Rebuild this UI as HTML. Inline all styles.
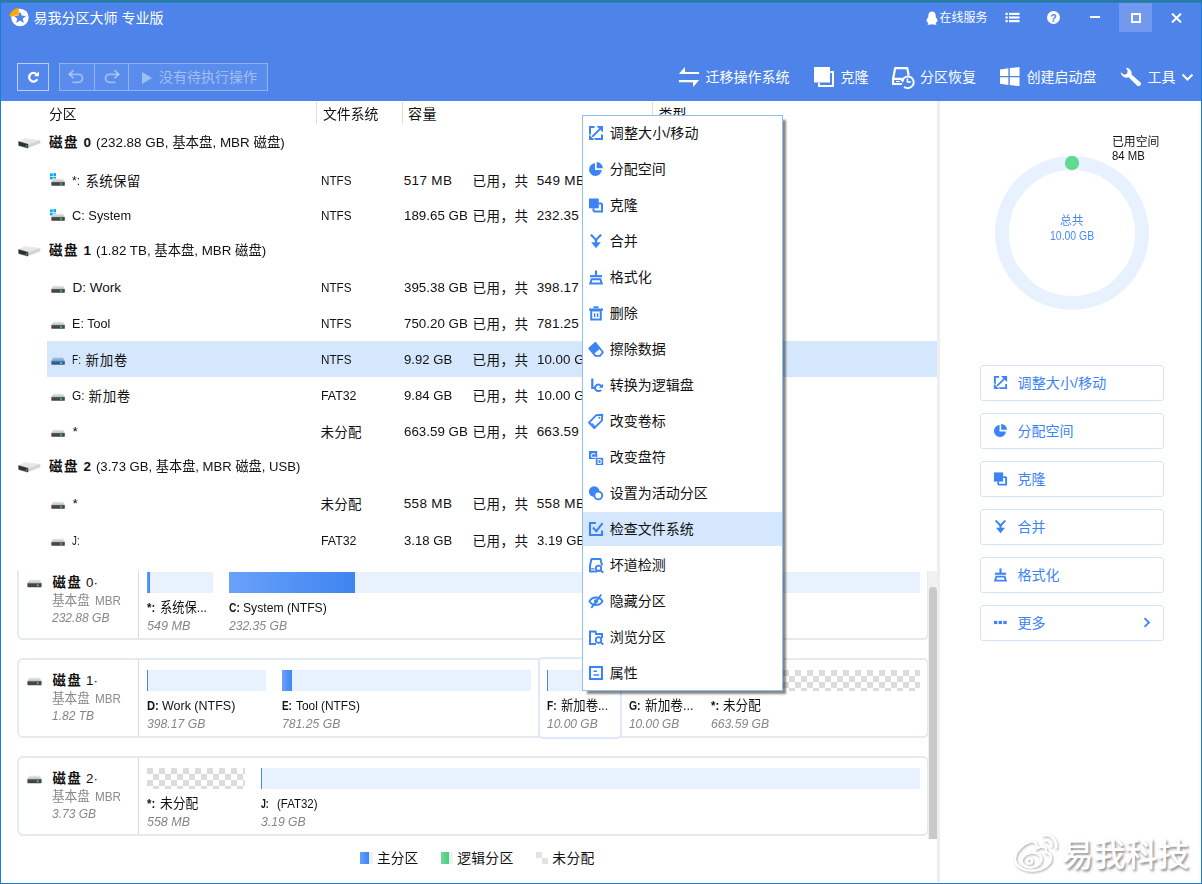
<!DOCTYPE html>
<html lang="zh-CN"><head>
<meta charset="utf-8">
<title>易我分区大师 专业版</title>
<style>
*{box-sizing:border-box;margin:0;padding:0}
html,body{width:1202px;height:884px;overflow:hidden;background:#fff}
body{font-family:"Liberation Sans","Noto Sans CJK SC",sans-serif;font-size:14px;color:#111;position:relative}
.abs{position:absolute}
#win{position:absolute;left:0;top:0;width:1202px;height:884px;background:#fff;overflow:hidden}
#topedge{position:absolute;left:0;top:0;width:1202px;height:3px;background:linear-gradient(#2d7b9a 0,#2d7b9a 2px,#1c82d6 2px);z-index:50}
#ledge{position:absolute;left:0;top:2px;width:1px;height:882px;background:#1a7cd2;z-index:50}
#redge{position:absolute;left:1201px;top:2px;width:1px;height:882px;background:#1a7cd2;z-index:50}
#bedge{position:absolute;left:0;top:883px;width:1202px;height:1px;background:#1a7cd2;z-index:50}
#hdr{position:absolute;left:0;top:0;width:1202px;height:101px;background:#4e84ea;color:#fff}
.t{position:absolute;white-space:nowrap;line-height:1}
.ttl{left:33.500px;top:11px;font-size:14px;color:#fff}
.tb{font-size:15px;color:#fff;top:69px}
.box{position:absolute;border:1px solid rgba(255,255,255,.55)}
/* table */
.th{top:106px;font-size:15px;color:#111}
.colsep{position:absolute;top:102px;width:1px;height:22px;background:#dcdcdc}
.row{position:absolute;left:0;height:36px;width:938px}
.r{font-size:13.5px;color:#111}
.dk{font-size:13.5px;color:#111}
.dk b{font-weight:700}

.dbox{position:absolute;left:17px;width:912px;height:80px;border:2px solid #e5e9f0;border-radius:6px;background:#fff}
.dbox i{position:absolute;left:119px;top:0;width:1px;height:76px;background:#d5dbe8}
.bar{position:absolute;height:21px;background:#e8f2fe}
.used{position:absolute;left:0;top:0;height:21px;background:linear-gradient(90deg,#69a2f9,#3f84f0)}
.chk{position:absolute;height:21px;background-color:#fff;background-image:conic-gradient(#fff 25%,#dcdcdc 0 50%,#fff 0 75%,#dcdcdc 0);background-size:12px 12px}
.g{color:#8a8a8a}
.it{font-style:italic;color:#868686}

#menu{position:absolute;left:582px;top:115px;width:201px;height:576px;background:#fff;border:1px solid #8dc0ee;box-shadow:3.500px 4px 2px -1px rgba(0,0,0,.47);z-index:20}
.mi{font-size:14px;color:#111}
.btn{position:absolute;left:980px;width:184px;height:35.500px;border:1px solid #d4e3fb;border-radius:3px;background:#fff}
.bt{font-size:14px;color:#3c84f6}
</style>
</head>
<body>
<div id="win">
<div id="hdr">
  <svg class="abs" style="left:8px;top:7px" width="24" height="22" viewBox="0 0 24 22">
    <circle cx="12" cy="10.5" r="8.7" fill="#fff"></circle>
    <path d="M12 4.6l1.7 4 4.3.3-3.3 2.8 1.1 4.2-3.8-2.4-3.8 2.400 1.100-4.200-3.300-2.800 4.300-.3z" fill="#4e84ea"></path>
    <path d="M1.500 9.300C2.500 4.500 6.500 1.600 10.800 1v7.300H7.300l-1.300 1z" fill="#ffa800"></path>
  </svg>
  <div class="t ttl">易我分区大师 专业版</div>
</div>
<div id="topedge"></div><div id="ledge"></div><div id="redge"></div><div id="bedge"></div>

<!-- window controls -->
<svg class="abs" style="left:925px;top:11px" width="14" height="14" viewBox="0 0 14 14"><path d="M7 .5c2.400 0 3.700 1.900 3.700 4.300 0 .6 0 1.100.2 1.500.9 1.200 1.700 2.600 1.700 3.600 0 .8-.4.900-.8.400-.2.900-.6 1.500-1.200 2 .6.300.9.600.9.900 0 .5-1 .6-2 .6-.9 0-1.800-.2-2.500-.5-.7.300-1.600.5-2.500.5-1 0-2-.1-2-.6 0-.3.300-.6.900-.9-.6-.5-1-1.100-1.200-2-.4.500-.8.400-.8-.4 0-1 .8-2.400 1.700-3.600.2-.4.200-.9.200-1.500C3.300 2.400 4.600.5 7 .5z" fill="#fff"></path></svg>
<div class="t" style="left:939.500px;top:12px;font-size:12px;color:#fff">在线服务</div>
<svg class="abs" style="left:1005px;top:12px" width="15" height="11" viewBox="0 0 15 11"><g fill="#fff"><rect x=".5" y=".8" width="2.200" height="2.200"></rect><rect x="4" y=".8" width="10.500" height="2.200"></rect><rect x=".5" y="4.400" width="2.200" height="2.200"></rect><rect x="4" y="4.400" width="10.500" height="2.200"></rect><rect x=".5" y="8" width="2.200" height="2.200"></rect><rect x="4" y="8" width="10.500" height="2.200"></rect></g></svg>
<div class="abs" style="left:1047px;top:11px;width:13px;height:13px;border-radius:50%;background:#fff"></div>
<div class="t" style="left:1050.300px;top:12.500px;font-size:10.500px;font-weight:700;color:#4e84ea">?</div>
<div class="abs" style="left:1090px;top:16.200px;width:10px;height:2.200px;background:#fff"></div>
<div class="abs" style="left:1119px;top:3px;width:33px;height:28.500px;background:#7399ee"></div>
<div class="abs" style="left:1130.500px;top:13px;width:10px;height:9.500px;border:2px solid #fff"></div>
<svg class="abs" style="left:1171px;top:12.500px" width="11" height="10" viewBox="0 0 11 10"><path d="M1 .6l9 8.800M10 .6L1 9.400" stroke="#fff" stroke-width="2.100" fill="none"></path></svg>
<!-- left toolbar -->
<div class="box" style="left:17px;top:63px;width:32px;height:28px;border-color:rgba(255,255,255,.6);background:rgba(255,255,255,.03)"></div>
<svg class="abs" style="left:26px;top:70px" width="15" height="15" viewBox="0 0 15 15"><path d="M11.300 9.200A4.300 4.300 0 1 1 10.600 4.300" fill="none" stroke="#fff" stroke-width="2.300"></path><path d="M8.200 6.300h4.800V1.500z" fill="#fff"></path></svg>
<div class="box" style="left:59px;top:63px;width:209px;height:28px;border-color:rgba(255,255,255,.33);background:rgba(255,255,255,.07)"></div>
<div class="abs" style="left:93.500px;top:64px;width:1px;height:26px;background:rgba(255,255,255,.33)"></div>
<div class="abs" style="left:127.500px;top:64px;width:1px;height:26px;background:rgba(255,255,255,.33)"></div>
<svg class="abs" style="left:68px;top:69px" width="18" height="15" viewBox="0 0 18 15"><path d="M1.200 5.300H10.500a4 4 0 0 1 0 8H4.500" fill="none" stroke="rgba(255,255,255,.42)" stroke-width="1.800"></path><path d="M5.600 1.200L1.400 5.300l4.200 4.100" fill="none" stroke="rgba(255,255,255,.42)" stroke-width="1.800"></path></svg>
<svg class="abs" style="left:102px;top:69px" width="18" height="15" viewBox="0 0 18 15"><g transform="translate(18,0) scale(-1,1)"><path d="M1.200 5.300H10.500a4 4 0 0 1 0 8H4.500" fill="none" stroke="rgba(255,255,255,.42)" stroke-width="1.800"></path><path d="M5.600 1.200L1.400 5.300l4.200 4.100" fill="none" stroke="rgba(255,255,255,.42)" stroke-width="1.800"></path></g></svg>
<svg class="abs" style="left:141.500px;top:71.500px" width="10" height="12" viewBox="0 0 10 12"><path d="M0 0l10 6-10 6z" fill="rgba(255,255,255,.42)"></path></svg>
<div class="t" style="left:159px;top:70px;font-size:14px;color:rgba(255,255,255,.45)">没有待执行操作</div>
<!-- right toolbar -->
<svg class="abs" style="left:678px;top:67px" width="22" height="21" viewBox="0 0 22 21"><path d="M.9 7.100L6.800 0 7.200 4.900H21.100V7.100z" fill="#fff"></path><path d="M.9 13H21.100L15.300 20.100 14.800 15.200H.9z" fill="#fff"></path></svg>
<div class="t tb" style="left:705.500px;top:70px;font-size:14px">迁移操作系统</div>
<svg class="abs" style="left:813px;top:66px" width="22" height="22" viewBox="0 0 22 22"><rect x="1" y="1" width="16" height="15.500" fill="#fff"></rect><path d="M17.200 6h2.800v14h-14v-3.300" fill="none" stroke="#fff" stroke-width="2"></path></svg>
<div class="t tb" style="left:840.500px;top:70px;font-size:14px">克隆</div>
<svg class="abs" style="left:891px;top:67px" width="25" height="23" viewBox="0 0 25 23"><g fill="none" stroke="#fff" stroke-width="2.200" stroke-linejoin="miter"><path d="M2.100 11.900L4.200 1.100H16.200L17.700 8.500"></path><path d="M11.500 11.900H2.100V17H11"></path></g><path d="M5 14.500H8.800" stroke="#fff" stroke-width="1.100"></path><circle cx="16.900" cy="15.300" r="5.800" fill="#4e84ea"></circle><path d="M11.490 13.220A5.800 5.800 0 1 1 13.100 19.680" fill="none" stroke="#fff" stroke-width="1.900"></path><path d="M9 12.600L13.600 11.300 12 15.800z" fill="#fff"></path><path d="M16.400 11.600V15H19.900" fill="none" stroke="#fff" stroke-width="1.500"></path></svg>
<div class="t tb" style="left:920px;top:70px;font-size:14px">分区恢复</div>
<svg class="abs" style="left:999.500px;top:66.800px" width="20" height="19.500" viewBox="0 0 21 21" preserveAspectRatio="none"><g fill="#fff"><path d="M0 2.600L8.800 1.400V9.600H0z"></path><path d="M10.300 1.200L20.500 0V9.600H10.300z"></path><path d="M0 11.100H8.800V19.300L0 18.100z"></path><path d="M10.300 11.100H20.500V20.700L10.300 19.500z"></path></g></svg>
<div class="t tb" style="left:1026.500px;top:70px;font-size:14px">创建启动盘</div>
<svg class="abs" style="left:1119.500px;top:67px" width="22" height="20" viewBox="0 0 22 20"><path d="M5.800.7a5.600 5.600 0 0 1 5.700 6.800L20.300 15.200a2.300 2.300 0 0 1-3.300 3.300L8.600 10.300A5.600 5.600 0 0 1 .8 5.200L4 7.700 7 6.800 7.700 3.700z" fill="#fff"></path></svg>
<div class="t tb" style="left:1147.500px;top:70px;font-size:14px">工具</div>
<svg class="abs" style="left:1181px;top:73px" width="13" height="9" viewBox="0 0 13 9"><path d="M1.500 1.500L6.500 6.500l5-5" fill="none" stroke="#fff" stroke-width="2"></path></svg>
<!--TOOLBAR-->

<svg width="0" height="0" style="position:absolute">
 <defs>
  <linearGradient id="gtop" x1="0" y1="0" x2="0" y2="1"><stop offset="0" stop-color="#f0f0f0"></stop><stop offset="1" stop-color="#b9bbbd"></stop></linearGradient>
  <linearGradient id="gtopb" x1="0" y1="0" x2="0" y2="1"><stop offset="0" stop-color="#a9c6e6"></stop><stop offset="1" stop-color="#6f9fd0"></stop></linearGradient>
  <symbol id="drv" viewBox="0 0 15 9"><path d="M2.300.5h10.400L14.500 4.300H.5z" fill="url(#gtop)"></path><rect x=".4" y="4.200" width="14.200" height="4" rx=".6" fill="#454545"></rect><rect x=".4" y="4.200" width="14.200" height=".7" fill="#6a6a6a"></rect><circle cx="10.700" cy="6.300" r="1" fill="#3be04a"></circle></symbol>
  <symbol id="drvb" viewBox="0 0 15 9"><path d="M2.300.5h10.400L14.500 4.300H.5z" fill="url(#gtopb)"></path><rect x=".4" y="4.200" width="14.200" height="4" rx=".6" fill="#2f5f8f"></rect><rect x=".4" y="4.200" width="14.200" height=".7" fill="#4f82b5"></rect><circle cx="10.700" cy="6.300" r="1" fill="#5cf08a"></circle></symbol>
  <symbol id="flag" viewBox="0 0 7 7"><g fill="#00adef"><rect x="0" y=".3" width="2.900" height="2.800"></rect><rect x="3.600" y="0" width="3.100" height="3.100"></rect><rect x="0" y="3.800" width="2.900" height="2.800"></rect><rect x="3.600" y="3.800" width="3.100" height="3.100"></rect></g></symbol>
  <symbol id="hdd" viewBox="0 0 23 12"><path d="M.7 4.600L6.800 1.300 22.200 2.900 10 7.300z" fill="#e6e7e8"></path><path d="M10 7.300L22.200 2.900 22.400 6.300 10 11.100z" fill="#d3d4d6"></path><path d="M.7 4.600L10 7.300V11.100L.7 8.500z" fill="#303030" stroke="#303030" stroke-width=".5" stroke-linejoin="round"></path><circle cx="8.500" cy="8.900" r=".95" fill="#2cb83c"></circle></symbol>
<symbol id="i-resize" viewBox="0 0 16 16"><path d="M6.500 2H2v12h12V9.500" fill="none" stroke="#3c84f6" stroke-width="2"></path><path d="M3.500 12.500L12.500 3.500" stroke="#3c84f6" stroke-width="1.800"></path><path d="M8.500 1h6.500v6.500z" fill="#3c84f6"></path><path d="M1 8.500v6.500h6.500z" fill="#fff"></path><path d="M1 9.500v5.500h5.500z" fill="#3c84f6"></path><path d="M9.500 1h5.500v5.500z" fill="#3c84f6"></path></symbol><symbol id="i-pie" viewBox="0 0 16 16"><path d="M7 2.200A6.400 6.400 0 1 0 13.800 9H7z" fill="#3c84f6"></path><path d="M8.700 1.100A6.300 6.300 0 0 1 14.900 7.300H8.700z" fill="#3c84f6"></path></symbol><symbol id="i-clone" viewBox="0 0 16 16"><rect x="1" y="1.500" width="9.800" height="9.800" fill="#3c84f6"></rect><path d="M14 6.500v8h-8.500" fill="none" stroke="#3c84f6" stroke-width="2"></path><path d="M5.500 11.300v3.200M10.800 6.500h3.200" stroke="#3c84f6" stroke-width="2"></path></symbol><symbol id="i-merge" viewBox="0 0 16 16"><path d="M3 1.500C4.500 4.500 8 4.800 8 8.500M13 1.500C11.500 4.500 8 4.800 8 8.500V11" fill="none" stroke="#3c84f6" stroke-width="2.100"></path><path d="M3.200 9.300h9.600L8 15.200z" fill="#3c84f6"></path></symbol><symbol id="i-format" viewBox="0 0 16 16"><path d="M8 1.500v5" stroke="#3c84f6" stroke-width="2.200"></path><path d="M2 7.200h12" stroke="#3c84f6" stroke-width="2.200"></path><path d="M3.600 10.300h8.800l1.300 4.200H2.300z" fill="none" stroke="#3c84f6" stroke-width="2"></path></symbol><symbol id="i-trash" viewBox="0 0 16 16"><path d="M5.500 2.300h5" stroke="#3c84f6" stroke-width="2"></path><path d="M1 4.600h14" stroke="#3c84f6" stroke-width="2.200"></path><rect x="3.200" y="5.500" width="9.600" height="9" fill="none" stroke="#3c84f6" stroke-width="2"></rect><path d="M6.600 8.300v3.700M9.600 8.300v3.700" stroke="#3c84f6" stroke-width="1.500"></path></symbol><symbol id="i-erase" viewBox="0 0 16 16"><path d="M7.300 1.800L15 11.200 12 14.800H7.500L1.200 7.300z" fill="none" stroke="#3c84f6" stroke-width="1.800" stroke-linejoin="round"></path><path d="M7.300 1.800L12.200 7.800 6.200 12.500 1.200 7.300z" fill="#3c84f6"></path></symbol><symbol id="i-convert" viewBox="0 0 16 16"><path d="M4.300 1.500V10.800H7" fill="none" stroke="#3c84f6" stroke-width="2.200"></path><path d="M13.600 10A3.300 3.300 0 1 0 13 12.800" fill="none" stroke="#3c84f6" stroke-width="2"></path><path d="M10.800 10.800h4.200V6.800z" fill="#3c84f6"></path></symbol><symbol id="i-tag" viewBox="0 0 16 16"><path d="M8.300 2.200L14.300 1.700 13.800 7.700 6.300 15.200 1 9.700z" fill="none" stroke="#3c84f6" stroke-width="1.900" stroke-linejoin="round"></path><circle cx="11.300" cy="4.700" r="1" fill="#3c84f6"></circle><path d="M3.500 10.200l3.600 3.600" stroke="#3c84f6" stroke-width="1.300"></path></symbol><symbol id="i-letter" viewBox="0 0 16 16"><rect x="1" y="2" width="8.200" height="8" fill="#3c84f6"></rect><rect x="7.200" y="8.200" width="8" height="7.800" fill="#fff"></rect><rect x="7.800" y="8.800" width="7.400" height="7.200" fill="#3c84f6"></rect><text x="5" y="8.600" font-family="Liberation Sans,sans-serif" font-weight="700" font-size="6.800" fill="#fff" text-anchor="middle">C</text><text x="11.500" y="15" font-family="Liberation Sans,sans-serif" font-weight="700" font-size="6.800" fill="#fff" text-anchor="middle">D</text></symbol><symbol id="i-active" viewBox="0 0 16 16"><circle cx="6.200" cy="6.500" r="5.300" fill="#3c84f6"></circle><circle cx="10.300" cy="10.500" r="4.600" fill="#fff"></circle><circle cx="10.300" cy="10.500" r="3.900" fill="none" stroke="#3c84f6" stroke-width="1.900"></circle><path d="M6.200 1.200a5.300 5.300 0 0 1 5.300 5.300" fill="none" stroke="#3c84f6" stroke-width="0"></path></symbol><symbol id="i-check" viewBox="0 0 16 16"><path d="M8 2H2v12h12V9.500" fill="none" stroke="#3c84f6" stroke-width="2.100"></path><path d="M5 6.500l3.300 3.700L14.600 2.200" fill="none" stroke="#3c84f6" stroke-width="2.100"></path></symbol><symbol id="i-bad" viewBox="0 0 16 16"><path d="M9 14.500H2V8.500L3.500 2H12.500L14 8.500" fill="none" stroke="#3c84f6" stroke-width="2" stroke-linejoin="round"></path><path d="M3.200 11.800h3.200" stroke="#3c84f6" stroke-width="1.300"></path><circle cx="10.500" cy="11.300" r="2.700" fill="#fff" stroke="#3c84f6" stroke-width="1.800"></circle><path d="M12.500 13.300l2.800 2.500" stroke="#3c84f6" stroke-width="1.900"></path></symbol><symbol id="i-hide" viewBox="0 0 16 16"><path d="M1.500 8.300C4.500 3.300 11.500 3.300 14.500 8.300 11.500 13.300 4.500 13.300 1.500 8.300z" fill="none" stroke="#3c84f6" stroke-width="1.900"></path><circle cx="8" cy="8.300" r="2.100" fill="#3c84f6"></circle><path d="M13.300 1.500L3.300 15" stroke="#3c84f6" stroke-width="1.900"></path></symbol><symbol id="i-browse" viewBox="0 0 16 16"><path d="M8 15H2V2.500h5.500l.5 2.400h6v4" fill="none" stroke="#3c84f6" stroke-width="2"></path><circle cx="10.500" cy="11" r="2.800" fill="#fff" stroke="#3c84f6" stroke-width="1.800"></circle><path d="M12.600 13.100l2.700 2.500" stroke="#3c84f6" stroke-width="1.900"></path></symbol><symbol id="i-prop" viewBox="0 0 16 16"><rect x="2" y="2" width="12" height="12" fill="none" stroke="#3c84f6" stroke-width="2.100"></rect><path d="M5.500 6.300h3.500M5.500 10h5.500" stroke="#3c84f6" stroke-width="1.600"></path></symbol><symbol id="i-more" viewBox="0 0 16 16"><rect x="1" y="6.300" width="3.600" height="3.400" fill="#3c84f6"></rect><rect x="6" y="6.300" width="3.600" height="3.400" fill="#3c84f6"></rect><rect x="11" y="6.300" width="3.600" height="3.400" fill="#3c84f6"></rect></symbol>
 </defs>
</svg>
<div class="colsep" style="left:316px"></div><div class="colsep" style="left:402px"></div><div class="colsep" style="left:652px"></div>
<div class="t" style="left: 48.7px; top: 107.3px; font-size: 14px; transform: scaleX(0.982); transform-origin: 0px 50%;">分区</div>
<div class="t" style="left: 322.5px; top: 107.3px; font-size: 14px; transform: scaleX(0.991); transform-origin: 0px 50%;">文件系统</div>
<div class="t" style="left: 408px; top: 107.3px; font-size: 14px; letter-spacing: 0.5px;">容量</div>
<div class="t" style="left: 658.5px; top: 107.3px; font-size: 14px;">类型</div>
<div class="abs" style="left:47px;top:341px;width:890px;height:36px;background:#d5e7fc"></div>
<svg class="abs" style="left:17.500px;top:136.7px" width="23" height="12"><use href="#hdd"></use></svg>
<div class="t" style="left: 49px; top: 135.75px; font-size: 13.5px; font-weight: 700; letter-spacing: 1.5px;">磁盘</div>
<div class="t" style="left:83.5px;top:135.75px;font-size:13.5px;font-weight:700;">0</div>
<div class="t" style="left: 95.6px; top: 135.75px; font-size: 13.5px; transform: scaleX(0.995); transform-origin: 0px 50%;">(232.88 GB, 基本盘, MBR 磁盘)</div>
<svg class="abs" style="left:49.800px;top:173.2px" width="6.700" height="6.900"><use href="#flag"></use></svg>
<svg class="abs" style="left:51px;top:177.5px" width="14.200" height="8.600"><use href="#drv"></use></svg>
<div class="t" style="left: 72.4px; top: 173.75px; font-size: 13.5px; transform: scaleX(0.887); transform-origin: 0px 50%;">*:</div>
<div class="t" style="left: 85.6px; top: 174.55px; font-size: 13.5px; letter-spacing: 0.23px;">系统保留</div>
<div class="t" style="left: 320.5px; top: 173.75px; font-size: 13.5px; transform: scaleX(0.865); transform-origin: 0px 50%;">NTFS</div>
<div class="t" style="left: 403.7px; top: 173.75px; font-size: 13.5px; letter-spacing: 0.35px;">517 MB</div>
<div class="t" style="left: 472.5px; top: 174.55px; font-size: 13.5px; letter-spacing: 0.5px;">已用，共</div>
<div class="t" style="left: 536.7px; top: 173.75px; font-size: 13.5px; letter-spacing: 0.35px;">549 MB</div>
<svg class="abs" style="left:49.800px;top:208.9px" width="6.700" height="6.900"><use href="#flag"></use></svg>
<svg class="abs" style="left:51px;top:213.2px" width="14.200" height="8.600"><use href="#drv"></use></svg>
<div class="t" style="left: 72.4px; top: 209.45px; font-size: 13.5px; transform: scaleX(0.949); transform-origin: 0px 50%;">C: System</div>
<div class="t" style="left: 320.5px; top: 209.45px; font-size: 13.5px; transform: scaleX(0.865); transform-origin: 0px 50%;">NTFS</div>
<div class="t" style="left: 403.7px; top: 209.45px; font-size: 13.5px; transform: scaleX(0.988); transform-origin: 0px 50%;">189.65 GB</div>
<div class="t" style="left: 472.5px; top: 210.25px; font-size: 13.5px; letter-spacing: 0.5px;">已用，共</div>
<div class="t" style="left: 536.7px; top: 209.45px; font-size: 13.5px; letter-spacing: 0.14px;">232.35</div>
<div class="t" style="left:583.5px;top:209.45px;font-size:13.5px;">GB</div>
<svg class="abs" style="left:17.500px;top:244.7px" width="23" height="12"><use href="#hdd"></use></svg>
<div class="t" style="left: 49px; top: 243.75px; font-size: 13.5px; font-weight: 700; letter-spacing: 1.5px;">磁盘</div>
<div class="t" style="left:83.5px;top:243.75px;font-size:13.5px;font-weight:700;">1</div>
<div class="t" style="left: 95.6px; top: 243.75px; font-size: 13.5px; transform: scaleX(0.988); transform-origin: 0px 50%;">(1.82 TB, 基本盘, MBR 磁盘)</div>
<svg class="abs" style="left:51px;top:285.2px" width="14.200" height="8.600"><use href="#drv"></use></svg>
<div class="t" style="left: 72.4px; top: 281.45px; font-size: 13.5px;">D: Work</div>
<div class="t" style="left: 320.5px; top: 281.45px; font-size: 13.5px; transform: scaleX(0.865); transform-origin: 0px 50%;">NTFS</div>
<div class="t" style="left: 403.7px; top: 281.45px; font-size: 13.5px; transform: scaleX(0.988); transform-origin: 0px 50%;">395.38 GB</div>
<div class="t" style="left: 472.5px; top: 282.25px; font-size: 13.5px; letter-spacing: 0.5px;">已用，共</div>
<div class="t" style="left: 536.7px; top: 281.45px; font-size: 13.5px; letter-spacing: 0.14px;">398.17</div>
<div class="t" style="left:583.5px;top:281.45px;font-size:13.5px;">GB</div>
<svg class="abs" style="left:51px;top:321.2px" width="14.200" height="8.600"><use href="#drv"></use></svg>
<div class="t" style="left: 72.4px; top: 317.45px; font-size: 13.5px; transform: scaleX(0.931); transform-origin: 0px 50%;">E: Tool</div>
<div class="t" style="left: 320.5px; top: 317.45px; font-size: 13.5px; transform: scaleX(0.865); transform-origin: 0px 50%;">NTFS</div>
<div class="t" style="left: 403.7px; top: 317.45px; font-size: 13.5px; transform: scaleX(0.988); transform-origin: 0px 50%;">750.20 GB</div>
<div class="t" style="left: 472.5px; top: 318.25px; font-size: 13.5px; letter-spacing: 0.5px;">已用，共</div>
<div class="t" style="left: 536.7px; top: 317.45px; font-size: 13.5px; letter-spacing: 0.14px;">781.25</div>
<div class="t" style="left:583.5px;top:317.45px;font-size:13.5px;">GB</div>
<svg class="abs" style="left:51px;top:357.2px" width="14.200" height="8.600"><use href="#drvb"></use></svg>
<div class="t" style="left: 72.4px; top: 353.45px; font-size: 13.5px; transform: scaleX(0.75); transform-origin: 0px 50%;">F:</div>
<div class="t" style="left: 85.6px; top: 354.25px; font-size: 13.5px; letter-spacing: 0.6px;">新加卷</div>
<div class="t" style="left: 320.5px; top: 353.45px; font-size: 13.5px; transform: scaleX(0.865); transform-origin: 0px 50%;">NTFS</div>
<div class="t" style="left: 403.7px; top: 353.45px; font-size: 13.5px; transform: scaleX(0.975); transform-origin: 0px 50%;">9.92 GB</div>
<div class="t" style="left: 472.5px; top: 354.25px; font-size: 13.5px; letter-spacing: 0.5px;">已用，共</div>
<div class="t" style="left: 536.7px; top: 353.45px; font-size: 13.5px; transform: scaleX(0.99); transform-origin: 0px 50%;">10.00 GB</div>
<svg class="abs" style="left:51px;top:393.2px" width="14.200" height="8.600"><use href="#drv"></use></svg>
<div class="t" style="left: 72.4px; top: 389.45px; font-size: 13.5px; transform: scaleX(0.876); transform-origin: 0px 50%;">G:</div>
<div class="t" style="left: 88.6px; top: 390.25px; font-size: 13.5px; letter-spacing: 0.6px;">新加卷</div>
<div class="t" style="left: 320.5px; top: 389.45px; font-size: 13.5px; transform: scaleX(0.915); transform-origin: 0px 50%;">FAT32</div>
<div class="t" style="left: 403.7px; top: 389.45px; font-size: 13.5px; transform: scaleX(0.975); transform-origin: 0px 50%;">9.84 GB</div>
<div class="t" style="left: 472.5px; top: 390.25px; font-size: 13.5px; letter-spacing: 0.5px;">已用，共</div>
<div class="t" style="left: 536.7px; top: 389.45px; font-size: 13.5px; transform: scaleX(0.99); transform-origin: 0px 50%;">10.00 GB</div>
<svg class="abs" style="left:51px;top:429.2px" width="14.200" height="8.600"><use href="#drv"></use></svg>
<div class="t" style="left: 72.4px; top: 425.45px; font-size: 13.5px;">*</div>
<div class="t" style="left: 320.5px; top: 426.25px; font-size: 13.5px; letter-spacing: 0.25px;">未分配</div>
<div class="t" style="left: 403.7px; top: 425.45px; font-size: 13.5px; transform: scaleX(0.988); transform-origin: 0px 50%;">663.59 GB</div>
<div class="t" style="left: 472.5px; top: 426.25px; font-size: 13.5px; letter-spacing: 0.5px;">已用，共</div>
<div class="t" style="left: 536.7px; top: 425.45px; font-size: 13.5px; letter-spacing: 0.14px;">663.59</div>
<div class="t" style="left:583.5px;top:425.45px;font-size:13.5px;">GB</div>
<svg class="abs" style="left:17.500px;top:460.5px" width="23" height="12"><use href="#hdd"></use></svg>
<div class="t" style="left: 49px; top: 459.55px; font-size: 13.5px; font-weight: 700; letter-spacing: 1.5px;">磁盘</div>
<div class="t" style="left:83.5px;top:459.55px;font-size:13.5px;font-weight:700;">2</div>
<div class="t" style="left: 95.6px; top: 459.55px; font-size: 13.5px; transform: scaleX(0.973); transform-origin: 0px 50%;">(3.73 GB, 基本盘, MBR 磁盘, USB)</div>
<svg class="abs" style="left:51px;top:501.2px" width="14.200" height="8.600"><use href="#drv"></use></svg>
<div class="t" style="left: 72.4px; top: 497.45px; font-size: 13.5px;">*</div>
<div class="t" style="left: 320.5px; top: 498.25px; font-size: 13.5px; letter-spacing: 0.25px;">未分配</div>
<div class="t" style="left: 403.7px; top: 497.45px; font-size: 13.5px; letter-spacing: 0.35px;">558 MB</div>
<div class="t" style="left: 472.5px; top: 498.25px; font-size: 13.5px; letter-spacing: 0.5px;">已用，共</div>
<div class="t" style="left: 536.7px; top: 497.45px; font-size: 13.5px; letter-spacing: 0.35px;">558 MB</div>
<svg class="abs" style="left:51px;top:537.5px" width="14.200" height="8.600"><use href="#drv"></use></svg>
<div class="t" style="left: 72.4px; top: 533.75px; font-size: 13.5px; transform: scaleX(0.723); transform-origin: 0px 50%;">J:</div>
<div class="t" style="left: 320.5px; top: 533.75px; font-size: 13.5px; transform: scaleX(0.915); transform-origin: 0px 50%;">FAT32</div>
<div class="t" style="left: 403.7px; top: 533.75px; font-size: 13.5px; transform: scaleX(0.975); transform-origin: 0px 50%;">3.18 GB</div>
<div class="t" style="left: 472.5px; top: 534.55px; font-size: 13.5px; letter-spacing: 0.5px;">已用，共</div>
<div class="t" style="left: 536.7px; top: 533.75px; font-size: 13.5px; transform: scaleX(0.975); transform-origin: 0px 50%;">3.19 GB</div>
<!--TABLE-->
<div id="map" class="abs" style="left:0;top:571px;width:938px;height:311px;overflow:hidden">
<div class="dbox" style="top:-11px"><i></i></div>
<svg class="abs" style="left:26.500px;top:7.8px" width="15" height="9"><use href="#drv"></use></svg>
<div class="t" style="left: 52.4px; top: 5.05px; font-size: 13.3px; font-weight: 700; letter-spacing: 1.91px;">磁盘</div>
<div class="t" style="left:86px;top:5.05px;font-size:13.3px;">0·</div>
<div class="t g" style="left: 52.4px; top: 23.15px; font-size: 13.3px; transform: scaleX(0.948); transform-origin: 0px 50%;">基本盘</div>
<div class="t g" style="left: 95.3px; top: 23.15px; font-size: 13.3px; transform: scaleX(0.879); transform-origin: 0px 50%;">MBR</div>
<div class="t it" style="left: 52.4px; top: 39.75px; font-size: 13.3px; transform: scaleX(0.903); transform-origin: 0px 50%;">232.88 GB</div>
<div class="bar" style="left:146.7px;top:1px;width:66.20000000000002px"><div class="used" style="width:3px"></div></div>
<div class="t" style="left: 146.7px; top: 30.15px; font-size: 13.3px; font-weight: 700; transform: scaleX(0.853); transform-origin: 0px 50%;">*:</div>
<div class="t" style="left: 159.5px; top: 30.15px; font-size: 13.3px; transform: scaleX(0.922); transform-origin: 0px 50%;">系统保...</div>
<div class="t it" style="left: 146.7px; top: 47.95px; font-size: 13.3px; transform: scaleX(0.949); transform-origin: 0px 50%;">549 MB</div>
<div class="bar" style="left:228.8px;top:1px;width:690.9000000000001px"><div class="used" style="width:126.6px"></div></div>
<div class="t" style="left: 228.8px; top: 30.15px; font-size: 13.3px; font-weight: 700; transform: scaleX(0.77); transform-origin: 0px 50%;">C:</div>
<div class="t" style="left: 243px; top: 30.15px; font-size: 13.3px; transform: scaleX(0.914); transform-origin: 0px 50%;">System (NTFS)</div>
<div class="t it" style="left: 228.8px; top: 47.95px; font-size: 13.3px; transform: scaleX(0.912); transform-origin: 0px 50%;">232.35 GB</div>
<div class="dbox" style="top:87px"><i></i></div>
<svg class="abs" style="left:26.500px;top:105.8px" width="15" height="9"><use href="#drv"></use></svg>
<div class="t" style="left: 52.4px; top: 103.05px; font-size: 13.3px; font-weight: 700; letter-spacing: 1.91px;">磁盘</div>
<div class="t" style="left:86px;top:103.05px;font-size:13.3px;">1·</div>
<div class="t g" style="left: 52.4px; top: 121.15px; font-size: 13.3px; transform: scaleX(0.948); transform-origin: 0px 50%;">基本盘</div>
<div class="t g" style="left: 95.3px; top: 121.15px; font-size: 13.3px; transform: scaleX(0.879); transform-origin: 0px 50%;">MBR</div>
<div class="t it" style="left: 52.4px; top: 137.75px; font-size: 13.3px; transform: scaleX(0.902); transform-origin: 0px 50%;">1.82 TB</div>
<div class="bar" style="left:146.7px;top:99px;width:119.10000000000002px"><div class="used" style="width:1px;background:#4e84ea"></div></div>
<div class="t" style="left: 146.7px; top: 128.15px; font-size: 13.3px; font-weight: 700; transform: scaleX(0.841); transform-origin: 0px 50%;">D:</div>
<div class="t" style="left: 162px; top: 128.15px; font-size: 13.3px; transform: scaleX(0.939); transform-origin: 0px 50%;">Work (NTFS)</div>
<div class="t it" style="left: 146.7px; top: 145.95px; font-size: 13.3px; transform: scaleX(0.917); transform-origin: 0px 50%;">398.17 GB</div>
<div class="bar" style="left:282px;top:99px;width:248.70000000000005px"><div class="used" style="width:9.5px"></div></div>
<div class="t" style="left: 282px; top: 128.15px; font-size: 13.3px; font-weight: 700; transform: scaleX(0.745); transform-origin: 0px 50%;">E:</div>
<div class="t" style="left: 295.5px; top: 128.15px; font-size: 13.3px; transform: scaleX(0.893); transform-origin: 0px 50%;">Tool (NTFS)</div>
<div class="t it" style="left: 282px; top: 145.95px; font-size: 13.3px; transform: scaleX(0.917); transform-origin: 0px 50%;">781.25 GB</div>
<div class="abs" style="left:537.500px;top:85.500px;width:84.500px;height:82px;border:2px solid #dfe9fa;border-radius:5px;background:#fff"></div>
<div class="bar" style="left:547.4px;top:99px;width:66.10000000000002px"><div class="used" style="width:1px;background:#4e84ea"></div></div>
<div class="t" style="left: 547.4px; top: 128.15px; font-size: 13.3px; font-weight: 700; transform: scaleX(0.764); transform-origin: 0px 50%;">F:</div>
<div class="t" style="left: 560.5px; top: 128.15px; font-size: 13.3px; transform: scaleX(0.926); transform-origin: 0px 50%;">新加卷...</div>
<div class="t it" style="left: 547.4px; top: 145.95px; font-size: 13.3px; transform: scaleX(0.901); transform-origin: 0px 50%;">10.00 GB</div>
<div class="bar" style="left:629.3px;top:99px;width:65.70000000000005px"><div class="used" style="width:1px;background:#4e84ea"></div></div>
<div class="t" style="left: 629.3px; top: 128.15px; font-size: 13.3px; font-weight: 700; transform: scaleX(0.785); transform-origin: 0px 50%;">G:</div>
<div class="t" style="left: 644.5px; top: 128.15px; font-size: 13.3px; transform: scaleX(0.951); transform-origin: 0px 50%;">新加卷...</div>
<div class="t it" style="left: 629.3px; top: 145.95px; font-size: 13.3px; transform: scaleX(0.895); transform-origin: 0px 50%;">10.00 GB</div>
<div class="chk" style="left:710.8px;top:99px;width:208.9000000000001px"></div>
<div class="t" style="left: 710.8px; top: 128.15px; font-size: 13.3px; font-weight: 700; transform: scaleX(0.853); transform-origin: 0px 50%;">*:</div>
<div class="t" style="left: 723px; top: 128.15px; font-size: 13.3px; transform: scaleX(0.945); transform-origin: 0px 50%;">未分配</div>
<div class="t it" style="left: 710.8px; top: 145.95px; font-size: 13.3px; transform: scaleX(0.915); transform-origin: 0px 50%;">663.59 GB</div>
<div class="dbox" style="top:185px"><i></i></div>
<svg class="abs" style="left:26.500px;top:203.8px" width="15" height="9"><use href="#drv"></use></svg>
<div class="t" style="left: 52.4px; top: 201.05px; font-size: 13.3px; font-weight: 700; letter-spacing: 1.91px;">磁盘</div>
<div class="t" style="left:86px;top:201.05px;font-size:13.3px;">2·</div>
<div class="t g" style="left: 52.4px; top: 219.15px; font-size: 13.3px; transform: scaleX(0.948); transform-origin: 0px 50%;">基本盘</div>
<div class="t g" style="left: 95.3px; top: 219.15px; font-size: 13.3px; transform: scaleX(0.879); transform-origin: 0px 50%;">MBR</div>
<div class="t it" style="left: 52.4px; top: 235.75px; font-size: 13.3px; transform: scaleX(0.902); transform-origin: 0px 50%;">3.73 GB</div>
<div class="chk" style="left:146.7px;top:197px;width:98.10000000000002px"></div>
<div class="t" style="left: 146.7px; top: 226.15px; font-size: 13.3px; font-weight: 700; transform: scaleX(0.853); transform-origin: 0px 50%;">*:</div>
<div class="t" style="left: 159.5px; top: 226.15px; font-size: 13.3px; transform: scaleX(0.958); transform-origin: 0px 50%;">未分配</div>
<div class="t it" style="left: 146.7px; top: 243.95px; font-size: 13.3px; transform: scaleX(0.938); transform-origin: 0px 50%;">558 MB</div>
<div class="bar" style="left:260.8px;top:197px;width:658.9000000000001px"><div class="used" style="width:1px;background:#4e84ea"></div></div>
<div class="t" style="left: 260.8px; top: 226.15px; font-size: 13.3px; font-weight: 700; transform: scaleX(0.659); transform-origin: 0px 50%;">J:</div>
<div class="t" style="left: 277px; top: 226.15px; font-size: 13.3px; transform: scaleX(0.861); transform-origin: 0px 50%;">(FAT32)</div>
<div class="t it" style="left: 260.8px; top: 243.95px; font-size: 13.3px; transform: scaleX(0.916); transform-origin: 0px 50%;">3.19 GB</div>
<div class="abs" style="left:928px;top:0;width:9.500px;height:267.500px;background:#f1f1f1"></div>
<div class="abs" style="left:929.200px;top:16px;width:7.400px;height:251.500px;background:#c9c9c9;border-radius:3.700px 3.700px 0 0"></div>
<div class="abs" style="left:360px;top:281px;width:12.500px;height:12px;background:#e8f2fe"></div><div class="abs" style="left:360px;top:281px;width:8.500px;height:12px;background:linear-gradient(90deg,#62a0f9,#3f84f0)"></div>
<div class="t" style="left: 377.4px; top: 281px; font-size: 13.8px; transform: scaleX(0.993); transform-origin: 0px 50%;">主分区</div>
<div class="abs" style="left:440.700px;top:281px;width:12.500px;height:12px;background:#e8f5ee"></div><div class="abs" style="left:440.700px;top:281px;width:8.500px;height:12px;background:linear-gradient(90deg,#6fdc98,#4fca80)"></div>
<div class="t" style="left: 457.3px; top: 281px; font-size: 13.8px; letter-spacing: 0.24px;">逻辑分区</div>
<div class="abs" style="left:536.300px;top:281px;width:6px;height:6px;background:#e3e3e3"></div><div class="abs" style="left:542.300px;top:287px;width:6px;height:6px;background:#e3e3e3"></div>
<div class="t" style="left: 552.3px; top: 281px; font-size: 13.8px; letter-spacing: 0.35px;">未分配</div>
</div>
<div class="abs" style="left:937.300px;top:101px;width:2.500px;height:781px;background:#eeeeee"></div>
<!--MAP-->
<svg class="abs" style="left:990px;top:150px" width="166" height="166" viewBox="0 0 166 166"><circle cx="82" cy="83" r="70" fill="none" stroke="#e8f2fe" stroke-width="14"></circle><circle cx="82" cy="13" r="7.200" fill="#5fdb90"></circle></svg>
<div class="t" style="left: 1112.1px; top: 135.7px; font-size: 12px; transform: scaleX(0.987); transform-origin: 0px 50%;">已用空间</div>
<div class="t" style="left: 1112.1px; top: 149.6px; font-size: 12px; transform: scaleX(0.946); transform-origin: 0px 50%;">84 MB</div>
<div class="t" style="left: 1059.7px; top: 215px; font-size: 12px; color: rgb(74, 139, 245); transform: scaleX(0.983); transform-origin: 0px 50%;">总共</div>
<div class="t" style="left: 1049.8px; top: 230px; font-size: 12px; color: rgb(74, 139, 245); transform: scaleX(0.872); transform-origin: 0px 50%;">10.00 GB</div>
<div class="btn" style="top:365px"></div>
<svg class="abs" style="left:992.500px;top:375.3px" width="15" height="15"><use href="#i-resize"></use></svg>
<div class="t bt" style="left: 1017.6px; top: 375.9px; font-size: 14px; letter-spacing: 0.13px;">调整大小/移动</div>
<div class="btn" style="top:413px"></div>
<svg class="abs" style="left:992.500px;top:423.3px" width="15" height="15"><use href="#i-pie"></use></svg>
<div class="t bt" style="left: 1017.6px; top: 423.9px; font-size: 14px;">分配空间</div>
<div class="btn" style="top:461px"></div>
<svg class="abs" style="left:992.500px;top:471.3px" width="15" height="15"><use href="#i-clone"></use></svg>
<div class="t bt" style="left: 1017.6px; top: 471.9px; font-size: 14px;">克隆</div>
<div class="btn" style="top:509px"></div>
<svg class="abs" style="left:992.500px;top:519.3px" width="15" height="15"><use href="#i-merge"></use></svg>
<div class="t bt" style="left: 1017.6px; top: 519.9px; font-size: 14px;">合并</div>
<div class="btn" style="top:557px"></div>
<svg class="abs" style="left:992.500px;top:567.3px" width="15" height="15"><use href="#i-format"></use></svg>
<div class="t bt" style="left: 1017.6px; top: 567.9px; font-size: 14px;">格式化</div>
<div class="btn" style="top:605px"></div>
<svg class="abs" style="left:992.500px;top:615.3px" width="15" height="15"><use href="#i-more"></use></svg>
<div class="t bt" style="left: 1017.6px; top: 615.9px; font-size: 14px;">更多</div>
<svg class="abs" style="left:1143px;top:617px" width="8" height="11" viewBox="0 0 8 11"><path d="M1.500 1.200L6 5.500 1.500 9.800" fill="none" stroke="#3c84f6" stroke-width="1.800"></path></svg>
<!--RIGHT-->
<div id="menu">
<svg class="abs" style="left:4.500px;top:9.0px" width="16" height="16"><use href="#i-resize"></use></svg>
<div class="t mi" style="left: 26.8px; top: 10px; font-size: 14px; letter-spacing: 0.12px;">调整大小/移动</div>
<svg class="abs" style="left:4.500px;top:45.0px" width="16" height="16"><use href="#i-pie"></use></svg>
<div class="t mi" style="left: 26.8px; top: 46px; font-size: 14px;">分配空间</div>
<svg class="abs" style="left:4.500px;top:81.0px" width="16" height="16"><use href="#i-clone"></use></svg>
<div class="t mi" style="left: 26.8px; top: 82px; font-size: 14px;">克隆</div>
<svg class="abs" style="left:4.500px;top:117.0px" width="16" height="16"><use href="#i-merge"></use></svg>
<div class="t mi" style="left: 26.8px; top: 118px; font-size: 14px;">合并</div>
<svg class="abs" style="left:4.500px;top:153.0px" width="16" height="16"><use href="#i-format"></use></svg>
<div class="t mi" style="left: 26.8px; top: 154px; font-size: 14px;">格式化</div>
<svg class="abs" style="left:4.500px;top:189.0px" width="16" height="16"><use href="#i-trash"></use></svg>
<div class="t mi" style="left: 26.8px; top: 190px; font-size: 14px;">删除</div>
<svg class="abs" style="left:4.500px;top:225.0px" width="16" height="16"><use href="#i-erase"></use></svg>
<div class="t mi" style="left: 26.8px; top: 226px; font-size: 14px;">擦除数据</div>
<svg class="abs" style="left:4.500px;top:261.0px" width="16" height="16"><use href="#i-convert"></use></svg>
<div class="t mi" style="left: 26.8px; top: 262px; font-size: 14px;">转换为逻辑盘</div>
<svg class="abs" style="left:4.500px;top:297.0px" width="16" height="16"><use href="#i-tag"></use></svg>
<div class="t mi" style="left: 26.8px; top: 298px; font-size: 14px;">改变卷标</div>
<svg class="abs" style="left:4.500px;top:333.0px" width="16" height="16"><use href="#i-letter"></use></svg>
<div class="t mi" style="left: 26.8px; top: 334px; font-size: 14px;">改变盘符</div>
<svg class="abs" style="left:4.500px;top:369.0px" width="16" height="16"><use href="#i-active"></use></svg>
<div class="t mi" style="left: 26.8px; top: 370px; font-size: 14px;">设置为活动分区</div>
<div class="abs" style="left:0;top:396px;width:199px;height:34px;background:#d5e7fc"></div>
<svg class="abs" style="left:4.500px;top:405.0px" width="16" height="16"><use href="#i-check"></use></svg>
<div class="t mi" style="left: 26.8px; top: 406px; font-size: 14px;">检查文件系统</div>
<svg class="abs" style="left:4.500px;top:441.0px" width="16" height="16"><use href="#i-bad"></use></svg>
<div class="t mi" style="left: 26.8px; top: 442px; font-size: 14px;">坏道检测</div>
<svg class="abs" style="left:4.500px;top:477.0px" width="16" height="16"><use href="#i-hide"></use></svg>
<div class="t mi" style="left: 26.8px; top: 478px; font-size: 14px;">隐藏分区</div>
<svg class="abs" style="left:4.500px;top:513.0px" width="16" height="16"><use href="#i-browse"></use></svg>
<div class="t mi" style="left: 26.8px; top: 514px; font-size: 14px;">浏览分区</div>
<svg class="abs" style="left:4.500px;top:549.0px" width="16" height="16"><use href="#i-prop"></use></svg>
<div class="t mi" style="left: 26.8px; top: 550px; font-size: 14px;">属性</div>
</div>

<!-- watermark -->
<svg class="abs" style="left:1010px;top:830px;z-index:30" width="54" height="46" viewBox="0 0 54 46">
 <defs><filter id="wsh" x="-20%" y="-20%" width="150%" height="150%"><feDropShadow dx="1" dy="1.200" stdDeviation="1.100" flood-color="#000" flood-opacity=".38"></feDropShadow></filter></defs>
 <g fill="none" stroke="#fff" stroke-width="2" filter="url(#wsh)" stroke-linecap="round">
  <path d="M21 11.500C13 13.500 4.500 21.500 5 29.500 5.500 37 14 41 23 40.500 33 40 41 34.500 41 28 41 24.500 38 22.800 35.500 22.300 36.800 19.500 36 17.500 33.500 17 31 16.500 28 17.500 26.500 18.500 27.500 14.500 25.500 11 21 11.500z"></path>
  <ellipse cx="21.500" cy="30" rx="10" ry="7.300" transform="rotate(-12 21.500 30)"></ellipse>
  <circle cx="19.500" cy="31" r="2.600"></circle>
  <path d="M33 5.500C40.500 3.500 47.500 9.500 46 18"></path>
  <path d="M34.500 10.500C38.500 9.700 42 12.500 41.300 16.500"></path>
 </g>
</svg>
<div class="t" style="left:1062px;top:839.500px;font-size:31.500px;font-weight:500;color:#fff;letter-spacing:.4px;text-shadow:1.500px 2px 2.500px rgba(0,0,0,.45);z-index:30">易我科技</div>
<!--MENU-->
</div>


</body></html>
